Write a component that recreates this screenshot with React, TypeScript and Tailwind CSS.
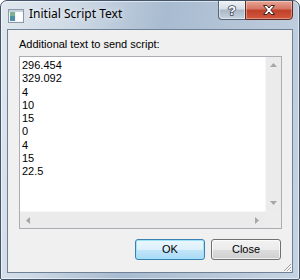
import React from 'react';

const lines = ['296.454', '329.092', '4', '10', '15', '0', '4', '15', '22.5'];

const uiFont = { fontFamily: '"Liberation Sans", Arial, sans-serif' };

function Arrow({ dir, className = '' }: { dir: 'up' | 'down' | 'left' | 'right'; className?: string }) {
  const pts: Record<string, string> = {
    up: '0,4 3.5,0 7,4',
    down: '0,0 3.5,4 7,0',
    left: '4,0 0,3.5 4,7',
    right: '0,0 4,3.5 0,7',
  };
  const vertical = dir === 'up' || dir === 'down';
  return (
    <svg
      width={vertical ? 7 : 4}
      height={vertical ? 4 : 7}
      viewBox={vertical ? '0 0 7 4' : '0 0 4 7'}
      className={className}
    >
      <polygon points={pts[dir]} fill="#a6a6a6" />
    </svg>
  );
}

function AppIcon() {
  return (
    <svg width="16" height="16" viewBox="0 0 16 16">
      <rect x="0.5" y="1.5" width="15" height="13" fill="#f4f6f8" stroke="#8c98a6" />
      <rect x="2" y="4" width="5" height="9" fill="#4f8fa7" />
      <rect x="2" y="4" width="5" height="4" fill="#7cb28f" />
      <rect x="8" y="4" width="6" height="9" fill="#ffffff" />
      <rect x="1" y="2" width="14" height="2" fill="#c7d2de" />
    </svg>
  );
}

function CaptionButtons() {
  return (
    <div className="ml-auto mr-[6px] mt-[-1px] flex">
      <div className="flex h-[20px] w-[27px] items-center justify-center rounded-bl-[4px] border border-r-0 border-[#55657a] bg-[linear-gradient(180deg,#eef2f6_0%,#d5dde6_45%,#aab7c6_50%,#c6d2de_100%)] shadow-[inset_0_0_0_1px_rgba(255,255,255,0.45)]">
        <svg width="12" height="14" viewBox="0 0 12 14">
          <text
            x="6"
            y="12"
            textAnchor="middle"
            fontSize="13"
            fontWeight="bold"
            fontFamily='"Liberation Sans", Arial, sans-serif'
            fill="#ffffff"
            stroke="#3e4a58"
            strokeWidth="1.6"
            paintOrder="stroke"
          >
            ?
          </text>
        </svg>
      </div>
      <div className="flex h-[20px] w-[48px] items-center justify-center rounded-br-[4px] border border-[#5b2b24] bg-[linear-gradient(180deg,#e8a596_0%,#d47461_45%,#c0402a_50%,#d3573d_100%)] shadow-[inset_0_0_0_1px_rgba(255,255,255,0.35)]">
        <svg width="14" height="12" viewBox="0 0 14 12">
          <path
            d="M1.5 1.5 H5 L7 4 L9 1.5 H12.5 L8.8 6 L12.5 10.5 H9 L7 8 L5 10.5 H1.5 L5.2 6 Z"
            fill="#ffffff"
            stroke="#3a2420"
            strokeWidth="1"
            strokeLinejoin="round"
          />
        </svg>
      </div>
    </div>
  );
}

function ScriptBox() {
  return (
    <div className="mt-[5px] grid h-[173px] grid-cols-[1fr_16px] grid-rows-[1fr_17px] border border-[#abadb3] bg-white">
      <div className="overflow-hidden pl-[2px] pt-[2px] text-[11px] leading-[13.3px] text-black" style={uiFont}>
        {lines.map((l, i) => (
          <div key={i}>{l}</div>
        ))}
      </div>
      <div className="flex flex-col items-center justify-between border-l border-[#f7f7f7] bg-[#ebebeb] py-[6px]">
        <Arrow dir="up" />
        <Arrow dir="down" />
      </div>
      <div className="flex items-center justify-between border-t border-[#f7f7f7] bg-[#ebebeb] px-[6px]">
        <Arrow dir="left" />
        <Arrow dir="right" />
      </div>
      <div className="bg-[#ececec]" />
    </div>
  );
}

export default function App() {
  return (
    <div className="h-[280px] w-[300px] bg-white">
      <div className="flex h-[280px] w-[300px] flex-col overflow-hidden rounded-t-[7px] rounded-b-[2px] border border-[#46566a] bg-[linear-gradient(100deg,#e1e8ef_0%,#cdd9e5_22%,#a8bbd0_48%,#b6c6d8_72%,#c6d3e2_100%)] shadow-[inset_0_0_0_1px_rgba(255,255,255,0.55)]">
        <div className="flex h-[28px] shrink-0 items-start">
          <div className="ml-[7px] mt-[7px]">
            <AppIcon />
          </div>
          <div
            className="ml-[5px] mt-[5px] text-[12px] leading-[16px] text-black [text-shadow:0_0_6px_rgba(255,255,255,0.9)]"
            style={{ fontFamily: '"Noto Sans", "Open Sans", sans-serif' }}
          >
            Initial Script Text
          </div>
          <CaptionButtons />
        </div>
        <div className="relative mx-[6px] mb-[6px] flex flex-1 flex-col border border-[#6f8196] bg-[#f0f0f0] pl-[11px] pr-[10px] pt-[8px]">
          <div className="text-[11px] leading-[13px] text-black" style={uiFont}>
            Additional text to send script:
          </div>
          <ScriptBox />
          <div className="mt-[10px] flex justify-end gap-[6px] pr-[1px] text-[11px]" style={uiFont}>
            <button className="h-[21px] w-[70px] rounded-[3px] border border-[#3c7fb1] bg-[linear-gradient(180deg,#ecf7fd_0%,#dcf0fb_50%,#c3e5f9_50%,#a9dbf6_100%)] text-black shadow-[inset_0_0_0_1px_#9ee3f9]">
              OK
            </button>
            <button className="h-[21px] w-[70px] rounded-[3px] border border-[#707070] bg-[linear-gradient(180deg,#f2f2f2_0%,#ebebeb_50%,#dddddd_50%,#cfcfcf_100%)] text-black shadow-[inset_0_0_0_1px_rgba(255,255,255,0.7)]">
              Close
            </button>
          </div>
          <svg width="10" height="10" viewBox="0 0 10 10" className="absolute bottom-0 right-0">
            <path d="M9 2 L2 9 M9 5 L5 9 M9 8 L8 9" stroke="#a0a0a0" strokeWidth="1" />
            <path d="M10 3 L3 10 M10 6 L6 10" stroke="#ffffff" strokeWidth="1" />
          </svg>
        </div>
      </div>
    </div>
  );
}
